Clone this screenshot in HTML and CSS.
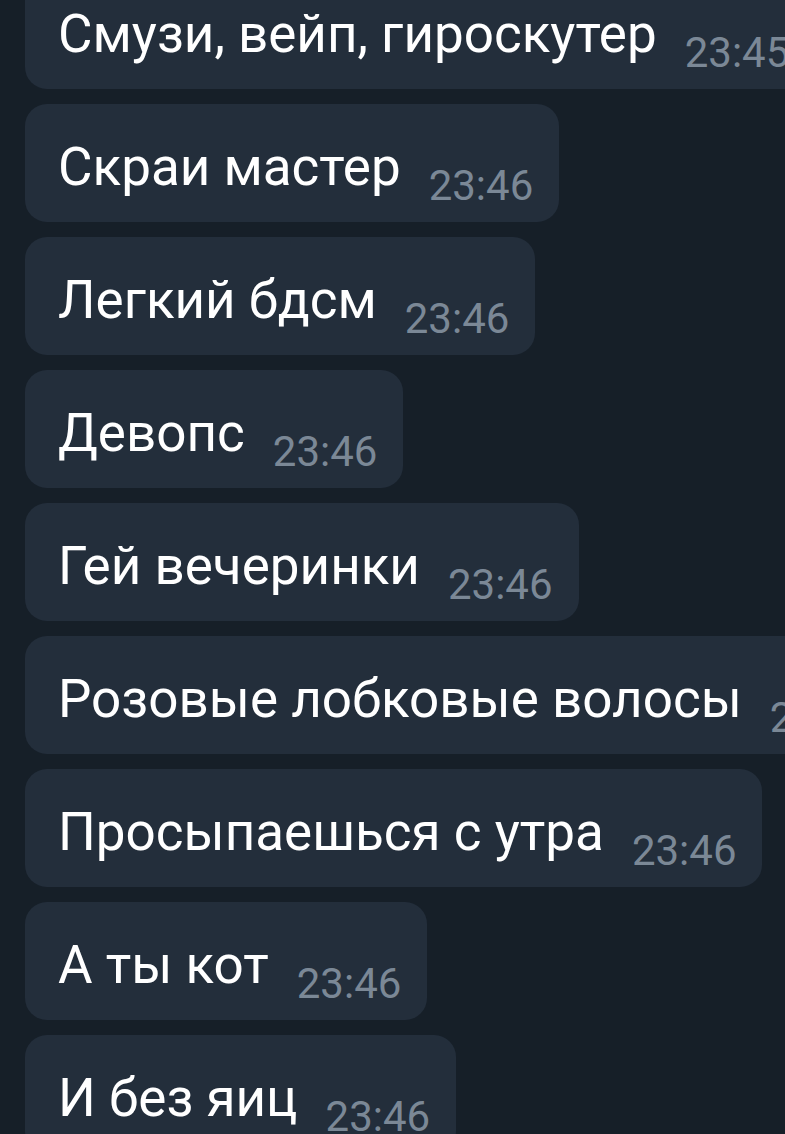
FILE: index.html
```html
<!DOCTYPE html>
<html lang="ru">
<head>
    <meta charset="UTF-8">
    <meta name="viewport" content="width=device-width, initial-scale=1.0">
    <title>Chat</title>
    <link rel="stylesheet" href="styles.css">
</head>
<body>
    <div class="chat">
        <div class="message"><span class="text">Смузи, вейп, гироскутер</span><span class="time">23:45</span></div>
        <div class="message"><span class="text">Скраи мастер</span><span class="time">23:46</span></div>
        <div class="message"><span class="text">Легкий бдсм</span><span class="time">23:46</span></div>
        <div class="message"><span class="text">Девопс</span><span class="time">23:46</span></div>
        <div class="message"><span class="text">Гей вечеринки</span><span class="time">23:46</span></div>
        <div class="message"><span class="text">Розовые лобковые волосы</span><span class="time">23:46</span></div>
        <div class="message"><span class="text">Просыпаешься с утра</span><span class="time">23:46</span></div>
        <div class="message"><span class="text">А ты кот</span><span class="time">23:46</span></div>
        <div class="message"><span class="text">И без яиц</span><span class="time">23:46</span></div>
    </div>
</body>
</html>
```

FILE: styles.css
```css
body {
    margin: 0;
    padding: 0;
    background-color: #161f28;
    font-family: Roboto, 'Noto Sans', sans-serif;
    overflow: hidden;
    height: 1134px;
}

.chat {
    display: flex;
    flex-direction: column;
    align-items: flex-start;
    gap: 15px;
    margin-top: -29px;
    padding-left: 25px;
}

.message {
    display: flex;
    align-items: flex-start;
    flex-shrink: 0;
    box-sizing: border-box;
    height: 118px;
    padding: 0 26px 0 33px;
    background-color: #232e3b;
    border-radius: 22px;
    white-space: nowrap;
}

.text {
    margin-top: 32px;
    font-size: 53px;
    line-height: 62px;
    color: #ffffff;
}

.time {
    margin-top: 57px;
    margin-left: 28px;
    font-size: 42px;
    line-height: 49px;
    color: #7b8896;
}
```
